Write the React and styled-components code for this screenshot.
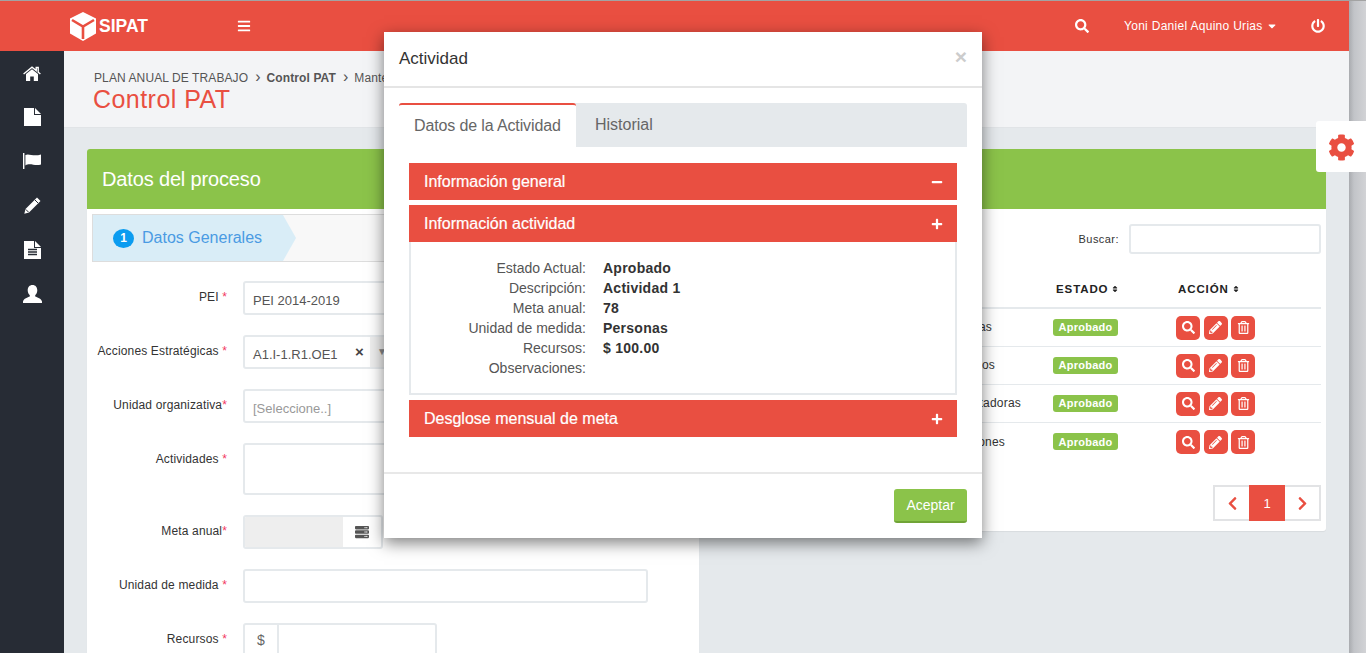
import styled, { createGlobalStyle } from 'styled-components'
import {
    FaBars, FaSearch, FaPowerOff, FaCog, FaPlus, FaMinus, FaSort, FaServer,
    FaPencilAlt, FaRegTrashAlt, FaChevronLeft, FaChevronRight, FaCaretDown,
} from 'react-icons/fa'

const RED = '#e94f41'
const GREEN = '#8bc34a'
const LINE = '#e5e9ec'

const GlobalStyle = createGlobalStyle`
    * { box-sizing: border-box; }
    html, body { margin: 0; padding: 0; height: 100%; overflow: hidden; }
    body { font-family: "Liberation Sans", Arial, sans-serif; font-size: 12px; color: #333; background: #e5e9ec; }
`

const Screen = styled.div`
    position: relative;
    display: flex;
    width: 1366px;
    height: 653px;
    overflow: hidden;
`
const Page = styled.div`
    width: 1349px;
    height: 653px;
    display: flex;
    flex-direction: column;
    border-top: 1px solid #a3a3a3;
`
const ScrollStrip = styled.div`
    width: 17px;
    border-top: 1px solid #a3a3a3;
    background: linear-gradient(90deg, #a9abaf 0, #c2c4c8 5px, #d2d3d6 100%);
`

const TopBar = styled.header`
    flex: none;
    height: 50px;
    background: ${RED};
    color: #fff;
    display: flex;
    align-items: center;
    padding-left: 69px;
`
const Brand = styled.div`
    display: flex;
    align-items: center;
    gap: 2px;
    font-size: 17.5px;
    font-weight: 700;
    width: 163px;
`
const BarButton = styled.span`
    display: flex;
    align-items: center;
    font-size: ${p => p.$size || 14}px;
    margin-left: ${p => p.$left || 0}px;
`
const UserName = styled.span`
    display: flex;
    align-items: center;
    gap: 3px;
    margin-left: 35px;
    font-size: 12px;
    letter-spacing: .29px;
`

const Body = styled.div`
    flex: 1;
    display: flex;
    min-height: 0;
`
const Sidebar = styled.nav`
    flex: none;
    width: 64px;
    background: #272c35;
`
const SideItem = styled.div`
    height: 44.2px;
    display: flex;
    align-items: center;
    justify-content: center;
`
const Main = styled.main`
    flex: 1;
    display: flex;
    flex-direction: column;
    min-width: 0;
`
const PageHead = styled.div`
    flex: none;
    height: 77px;
    padding: 19px 30px 0;
    background: #f3f4f6;
    border-bottom: 1px solid #e1e4e7;
`
const Crumbs = styled.div`
    display: flex;
    align-items: center;
    height: 15px;
    font-size: 12px;
    letter-spacing: .1px;
    color: #555;
`
const Crumb = styled.span`
    font-weight: ${p => p.$bold ? 700 : 400};
    margin-left: ${p => p.$first ? 0 : 7}px;
    &::before { content: ${p => p.$first ? 'none' : "'›'"}; font-size: 16px; margin-right: 6px; font-weight: 400; line-height: 12px; }
`
const PageTitle = styled.h1`
    margin: -1px 0 0 -1px;
    font-size: 25px;
    letter-spacing: .45px;
    line-height: 31px;
    font-weight: 400;
    color: ${RED};
`

const Content = styled.div`
    flex: 1;
    min-height: 0;
    overflow: hidden;
    padding: 21px 23px 0;
    display: grid;
    grid-template-columns: 612px 1fr;
    column-gap: 16px;
    align-items: start;
`
const Card = styled.section`
    background: #fff;
    border-radius: 3px;
    box-shadow: 0 1px 1px rgba(0,0,0,.06);
`
const CardHead = styled.div`
    height: 60px;
    background: ${GREEN};
    border-radius: 3px 3px 0 0;
    color: #fff;
    font-size: 20px;
    letter-spacing: -.15px;
    display: flex;
    align-items: center;
    padding-left: 15px;
`

const Wizard = styled.div`
    margin: 5px 5px 0;
    height: 48px;
    display: flex;
    background: #f8f8f8;
    border: 1px solid #ddd;
`
const Step = styled.div`
    position: relative;
    width: 190px;
    display: flex;
    align-items: center;
    gap: 8px;
    padding-left: 20px;
    background: #d9edf7;
    color: #4a9be3;
    font-size: 16px;
    &::after {
        content: '';
        position: absolute;
        left: 100%;
        top: 0;
        border-left: 13px solid #d9edf7;
        border-top: 23px solid transparent;
        border-bottom: 23px solid transparent;
    }
`
const StepNumber = styled.span`
    width: 21px;
    height: 19px;
    border-radius: 50%;
    background: #0b9cf0;
    color: #fff;
    font-size: 12px;
    font-weight: 700;
    display: flex;
    align-items: center;
    justify-content: center;
`

const Form = styled.div`
    padding: 19px 0 0;
    display: flex;
    flex-direction: column;
    gap: 20px;
`
const FormRow = styled.div`
    display: flex;
    gap: 16px;
`
const FieldLabel = styled.label`
    width: 140px;
    flex: none;
    text-align: right;
    line-height: 17px;
    padding-top: 6px;
    margin-top: 2px;
    font-size: 12px;
    color: #333;
    letter-spacing: .15px;
`
const Star = styled.span`
    color: #f2395f;
`
const Field = styled.div`
    width: ${p => p.$width || 405}px;
    height: ${p => p.$height || 34}px;
    border: 2px solid ${LINE};
    border-radius: 3px;
    background: #fff;
    display: flex;
    align-items: center;
    font-size: 13px;
    line-height: 18px;
    color: #555;
    padding-left: ${p => p.$flush ? 0 : 8}px;
    overflow: hidden;
`
const FieldText = styled.span`
    padding-top: 5px;
`
const Placeholder = styled(FieldText)`
    color: #999;
`
const SelectClear = styled.span`
    margin-left: auto;
    width: 15px;
    height: 100%;
    display: flex;
    align-items: center;
    font-weight: 700;
    font-size: 15px;
    color: #444;
`
const SelectArrow = styled.span`
    width: 276px;
    height: 100%;
    background: #eee;
    color: #888;
    font-size: 10px;
    display: flex;
    align-items: center;
    padding-left: 7px;
`
const GreyInput = styled.div`
    width: 98px;
    height: 100%;
    background: #eee;
`
const Addon = styled.div`
    flex: 1;
    display: flex;
    align-items: center;
    justify-content: center;
    font-size: 14px;
    color: #555;
`
const DollarAddon = styled.div`
    width: 34px;
    height: 100%;
    border-right: 2px solid ${LINE};
    display: flex;
    align-items: center;
    justify-content: center;
    font-size: 14px;
    color: #666;
`

const SearchRow = styled.div`
    display: flex;
    justify-content: flex-end;
    align-items: center;
    gap: 10px;
    padding: 15px 5px 0;
    font-size: 11px;
    letter-spacing: .45px;
`
const SearchBox = styled.div`
    width: 192px;
    height: 30px;
    border: 2px solid ${LINE};
    border-radius: 3px;
`
const Table = styled.div`
    margin: 16px 5px 0;
`
const HeadRow = styled.div`
    height: 39px;
    padding-top: 1px;
    display: flex;
    align-items: center;
    border-bottom: 2px solid ${LINE};
`
const Row = styled.div`
    height: 38px;
    padding-bottom: 1px;
    display: flex;
    align-items: center;
    border-bottom: ${p => p.$last ? 'none' : `1px solid ${LINE}`};
`
const NameCol = styled.div`
    width: 330px;
    flex: none;
    text-align: right;
    white-space: nowrap;
    overflow: hidden;
    font-size: 12px;
    letter-spacing: .2px;
    padding-right: ${p => p.$gap || 0}px;
`
const StateCol = styled.div`
    width: 126px;
    flex: none;
    display: flex;
    padding-left: 3px;
`
const HeadCell = styled.div`
    flex: none;
    width: ${p => p.$width}px;
    padding-left: ${p => p.$pad || 0}px;
    display: flex;
    align-items: center;
    gap: 3px;
    font-size: 11.5px;
    font-weight: 700;
    letter-spacing: .9px;
    color: #222;
`
const Badge = styled.span`
    width: 65px;
    height: 17px;
    background: ${GREEN};
    color: #fff;
    border-radius: 3px;
    font-size: 11px;
    font-weight: 700;
    letter-spacing: .25px;
    display: flex;
    align-items: center;
    justify-content: center;
`
const Actions = styled.div`
    display: flex;
    gap: 3.5px;
    margin-top: 1px;
`
const ActionButton = styled.span`
    width: 24px;
    height: 24px;
    background: ${RED};
    color: #fff;
    border-radius: 5px;
    font-size: 13px;
    display: flex;
    align-items: center;
    justify-content: center;
`
const Pager = styled.div`
    display: flex;
    justify-content: flex-end;
    margin: 24px 5px 0 0;
    padding-bottom: 10px;
`
const PagerCell = styled.span`
    width: 36px;
    height: 36px;
    display: flex;
    align-items: center;
    justify-content: center;
    font-size: ${p => p.$active ? 13 : 15}px;
    color: ${p => p.$active ? '#fff' : RED};
    background: ${p => p.$active ? RED : '#fff'};
    border: ${p => p.$active ? 'none' : '2px solid #e2e3e5'};
    border-left: ${p => p.$side === 'right' ? 'none' : undefined};
    border-right: ${p => p.$side === 'left' ? 'none' : undefined};
`

const SettingsTab = styled.div`
    position: absolute;
    top: 121px;
    right: 0;
    width: 50px;
    height: 51px;
    background: #fff;
    border-radius: 3px 0 0 3px;
    color: ${RED};
    font-size: 27px;
    display: flex;
    align-items: center;
    padding: 2px 0 0 12px;
`

const Modal = styled.div`
    position: absolute;
    top: 32px;
    left: 384px;
    width: 598px;
    height: 506px;
    background: #fff;
    box-shadow: 0 5px 15px rgba(0,0,0,.5);
    display: flex;
    flex-direction: column;
`
const ModalHead = styled.div`
    flex: none;
    height: 56px;
    border-bottom: 2px solid #e5e5e5;
    padding: 0 15px;
    display: flex;
    align-items: center;
    justify-content: space-between;
    font-size: 17px;
    color: #333;
`
const Close = styled.span`
    font-size: 21px;
    font-weight: 700;
    color: #ccc;
    margin: -5px 0 0;
    line-height: 1;
`
const ModalBody = styled.div`
    flex: 1;
    padding: 15px 15px 0;
`
const Tabs = styled.div`
    display: flex;
    height: 44px;
    background: ${LINE};
    border-radius: 3px 3px 0 0;
`
const Tab = styled.div`
    height: 100%;
    display: flex;
    align-items: center;
    font-size: 16px;
    color: #666;
    letter-spacing: ${p => p.$active ? '-.13px' : 0};
    ${p => p.$active
        ? `width: 177px; padding: 0 0 0 15px; background: #fff; border-top: 2px solid ${RED}; border-radius: 3px 3px 0 0;`
        : 'padding: 0 0 0 19px;'}
`
const Accordion = styled.div`
    margin: 16px 10px 0;
    display: flex;
    flex-direction: column;
`
const AccordionBar = styled.div`
    height: 37px;
    margin-top: ${p => p.$top || 0}px;
    background: ${RED};
    color: #fff;
    font-size: 16px;
    -webkit-text-stroke: .2px #fff;
    display: flex;
    align-items: center;
    justify-content: space-between;
    padding: 0 14px 0 15px;
`
const BarIcon = styled.span`
    display: flex;
    font-size: 12px;
    margin-top: 1px;
`
const AccordionPanel = styled.div`
    height: 153px;
    border: 2px solid ${LINE};
    border-top: none;
    padding-top: 16px;
`
const DetailRow = styled.div`
    display: flex;
    height: 20px;
    align-items: center;
    font-size: 14px;
`
const DetailLabel = styled.span`
    width: 175px;
    text-align: right;
    color: #555;
    margin-right: 17px;
`
const DetailValue = styled.span`
    font-weight: 700;
    font-size: 14px;
    letter-spacing: .25px;
    color: #333;
`
const ModalFoot = styled.div`
    flex: none;
    height: 66px;
    border-top: 2px solid #e8e8e8;
    display: flex;
    justify-content: flex-end;
    padding: 15px 15px 0;
`
const AcceptButton = styled.button`
    width: 73px;
    height: 34px;
    border: none;
    border-bottom: 2px solid #70a436;
    border-radius: 3px;
    background: ${GREEN};
    color: #fff;
    font-family: inherit;
    font-size: 14px;
    padding: 0;
`

// dibujos del menu lateral y del logo
const Cube = () => (
    <svg width="28" height="29" viewBox="0 0 28 29">
        <path d="M14 0 L27 6.5 V21.5 L14 29 L1 21.5 V6.5Z" fill="#fff" />
        <path d="M3 8 L14 14.5 L25 8 M14 14.5 V27" fill="none" stroke={RED} strokeWidth="2.6" />
    </svg>
)
const HomeIcon = () => (
    <svg width="18" height="15" viewBox="0 0 18 15" fill="#fff">
        <path d="M9 3.2 L15 8 V15 H10.8 V10.5 H7.2 V15 H3 V8Z" />
        <path d="M.6 8 L9 1.2 L13.2 4.6 V1.5 H15.2 V6.2 L17.4 8" fill="none" stroke="#fff" strokeWidth="1.4" />
    </svg>
)
const FileIcon = () => (
    <svg width="17" height="18" viewBox="0 0 17 18" fill="#fff">
        <path d="M0 0 H10 V7 H17 V18 H0Z" />
        <path d="M11 0 L17 6 H11Z" />
    </svg>
)
const FlagIcon = () => (
    <svg width="18" height="16" viewBox="0 0 18 16" fill="#fff">
        <rect x="0" y="0" width="1.4" height="16" />
        <path d="M2.4 2 C6 0 10 4 18 1.5 V11.5 C12 13.5 7 9.5 2.4 12.5Z" />
    </svg>
)
const PencilIcon = () => (
    <svg width="17" height="17" viewBox="0 0 17 17">
        <path d="M13 .5 L16.5 4 L5 15.5 L.3 16.7 L1.5 12Z" fill="#fff" />
        <path d="M11 3 L14 6 M1.8 12.4 L4.6 15.2" stroke="#272c35" strokeWidth="1" fill="none" />
    </svg>
)
const FileTextIcon = () => (
    <svg width="17" height="18" viewBox="0 0 17 18" fill="#fff">
        <path d="M0 0 H10 V7 H17 V18 H0Z" />
        <path d="M11 0 L17 6 H11Z" />
        <path d="M4 8.5 H13 M4 11 H13 M4 13.5 H13" stroke="#272c35" strokeWidth="1.3" />
    </svg>
)
const UserIcon = () => (
    <svg width="19" height="18" viewBox="0 0 19 18" fill="#fff">
        <path d="M9.5 0 C12.5 0 14.3 2.2 14.3 5.3 C14.3 7.5 13.4 9.3 12.2 10.3 V11.6 C14.2 12.6 18.3 13.4 19 16.6 V18 H0 V16.6 C.7 13.4 4.8 12.6 6.8 11.6 V10.3 C5.6 9.3 4.7 7.5 4.7 5.3 C4.7 2.2 6.5 0 9.5 0Z" />
    </svg>
)

const menu = [HomeIcon, FileIcon, FlagIcon, PencilIcon, FileTextIcon, UserIcon]

const fields = [
    { label: 'Estado Actual:', value: 'Aprobado' },
    { label: 'Descripción:', value: 'Actividad 1' },
    { label: 'Meta anual:', value: '78' },
    { label: 'Unidad de medida:', value: 'Personas' },
    { label: 'Recursos:', value: '$ 100.00' },
    { label: 'Observaciones:', value: '' },
]

const rows = [
    { name: 'Visitas técnicas', gap: 58 },
    { name: 'Talleres técnicos', gap: 55 },
    { name: 'Reuniones con exportadoras', gap: 29 },
    { name: 'Capacitaciones', gap: 45 },
]

export default function App(){
    return(
        <Screen>
            <GlobalStyle />
            <Page>
                <TopBar>
                    <Brand><Cube />SIPAT</Brand>
                    <BarButton $size={14} $left={5}><FaBars /></BarButton>
                    <BarButton $size={14} $left={824}><FaSearch /></BarButton>
                    <UserName>Yoni Daniel Aquino Urias <FaCaretDown size={12} /></UserName>
                    <BarButton $size={14} $left={33}><FaPowerOff /></BarButton>
                </TopBar>
                <Body>
                    <Sidebar>
                        {menu.map((Icon, i) => (
                            <SideItem key={i}><Icon /></SideItem>
                        ))}
                    </Sidebar>
                    <Main>
                        <PageHead>
                            <Crumbs>
                                <Crumb $first>PLAN ANUAL DE TRABAJO</Crumb>
                                <Crumb $bold>Control PAT</Crumb>
                                <Crumb>Mantenimiento</Crumb>
                            </Crumbs>
                            <PageTitle>Control PAT</PageTitle>
                        </PageHead>
                        <Content>
                            <Card>
                                <CardHead>Datos del proceso</CardHead>
                                <Wizard>
                                    <Step><StepNumber>1</StepNumber>Datos Generales</Step>
                                </Wizard>
                                <Form>
                                    <FormRow>
                                        <FieldLabel>PEI <Star>*</Star></FieldLabel>
                                        <Field><FieldText>PEI 2014-2019</FieldText></Field>
                                    </FormRow>
                                    <FormRow>
                                        <FieldLabel>Acciones Estratégicas <Star>*</Star></FieldLabel>
                                        <Field>
                                            <FieldText>A1.I-1.R1.OE1</FieldText>
                                            <SelectClear>×</SelectClear>
                                            <SelectArrow>▼</SelectArrow>
                                        </Field>
                                    </FormRow>
                                    <FormRow>
                                        <FieldLabel>Unidad organizativa<Star>*</Star></FieldLabel>
                                        <Field><Placeholder>[Seleccione..]</Placeholder></Field>
                                    </FormRow>
                                    <FormRow>
                                        <FieldLabel>Actividades <Star>*</Star></FieldLabel>
                                        <Field $height={52} />
                                    </FormRow>
                                    <FormRow>
                                        <FieldLabel>Meta anual<Star>*</Star></FieldLabel>
                                        <Field $width={140} $flush>
                                            <GreyInput />
                                            <Addon><FaServer /></Addon>
                                        </Field>
                                    </FormRow>
                                    <FormRow>
                                        <FieldLabel>Unidad de medida <Star>*</Star></FieldLabel>
                                        <Field />
                                    </FormRow>
                                    <FormRow>
                                        <FieldLabel>Recursos <Star>*</Star></FieldLabel>
                                        <Field $width={194} $flush><DollarAddon>$</DollarAddon></Field>
                                    </FormRow>
                                </Form>
                            </Card>
                            <Card>
                                <CardHead>Actividades</CardHead>
                                <SearchRow>Buscar: <SearchBox /></SearchRow>
                                <Table>
                                    <HeadRow>
                                        <NameCol />
                                        <HeadCell $width={128} $pad={6}>ESTADO <FaSort size={8} /></HeadCell>
                                        <HeadCell $width={100}>ACCIÓN <FaSort size={8} /></HeadCell>
                                    </HeadRow>
                                    {rows.map((row, i) => (
                                        <Row key={row.name} $last={i === rows.length - 1}>
                                            <NameCol $gap={row.gap}>{row.name}</NameCol>
                                            <StateCol><Badge>Aprobado</Badge></StateCol>
                                            <Actions>
                                                <ActionButton><FaSearch /></ActionButton>
                                                <ActionButton><FaPencilAlt /></ActionButton>
                                                <ActionButton><FaRegTrashAlt /></ActionButton>
                                            </Actions>
                                        </Row>
                                    ))}
                                </Table>
                                <Pager>
                                    <PagerCell $side="left"><FaChevronLeft /></PagerCell>
                                    <PagerCell $active>1</PagerCell>
                                    <PagerCell $side="right"><FaChevronRight /></PagerCell>
                                </Pager>
                            </Card>
                        </Content>
                    </Main>
                </Body>
            </Page>
            <ScrollStrip />
            <SettingsTab><FaCog /></SettingsTab>

            <Modal>
                <ModalHead>
                    Actividad
                    <Close>×</Close>
                </ModalHead>
                <ModalBody>
                    <Tabs>
                        <Tab $active>Datos de la Actividad</Tab>
                        <Tab>Historial</Tab>
                    </Tabs>
                    <Accordion>
                        <AccordionBar>Información general <BarIcon><FaMinus /></BarIcon></AccordionBar>
                        <AccordionBar $top={5}>Información actividad <BarIcon><FaPlus /></BarIcon></AccordionBar>
                        <AccordionPanel>
                            {fields.map(f => (
                                <DetailRow key={f.label}>
                                    <DetailLabel>{f.label}</DetailLabel>
                                    <DetailValue>{f.value}</DetailValue>
                                </DetailRow>
                            ))}
                        </AccordionPanel>
                        <AccordionBar $top={5}>Desglose mensual de meta <BarIcon><FaPlus /></BarIcon></AccordionBar>
                    </Accordion>
                </ModalBody>
                <ModalFoot>
                    <AcceptButton>Aceptar</AcceptButton>
                </ModalFoot>
            </Modal>
        </Screen>
    )
}
